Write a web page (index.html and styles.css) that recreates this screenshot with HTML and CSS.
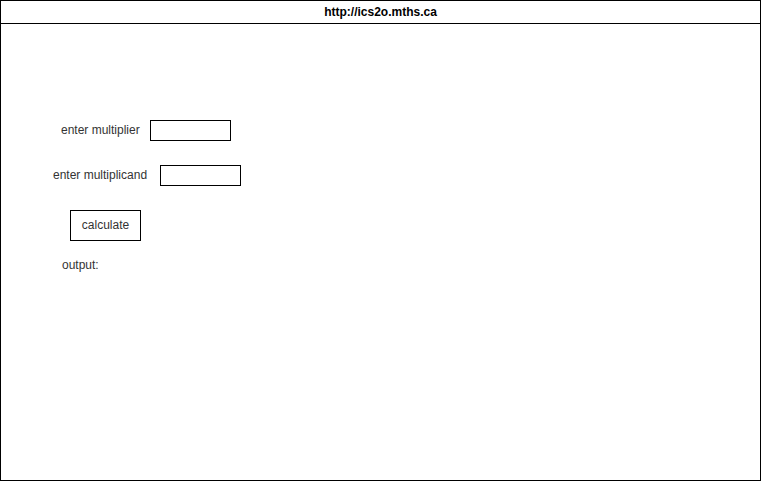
FILE: index.html
```html
<!DOCTYPE html>
<html>
<head>
<meta charset="utf-8">
<link rel="stylesheet" href="styles.css">
</head>
<body>
<div class="frame">
  <div class="titlebar">http://ics2o.mths.ca</div>
  <div class="content">
    <div class="row row-1">
      <span class="label">enter multiplier</span>
      <span class="field"></span>
    </div>
    <div class="row row-2">
      <span class="label">enter multiplicand</span>
      <span class="field"></span>
    </div>
    <div class="button-row">
      <span class="button">calculate</span>
    </div>
    <div class="output">output:</div>
  </div>
</div>
</body>
</html>
```
FILE: styles.css
```css
html, body {
  margin: 0;
  padding: 0;
  background: #fff;
}
body {
  font-family: "Liberation Sans", Arial, Helvetica, sans-serif;
  font-size: 12px;
  color: #333;
}
.frame {
  box-sizing: border-box;
  width: 761px;
  height: 481px;
  border: 1px solid #000;
  display: flex;
  flex-direction: column;
}
.titlebar {
  box-sizing: border-box;
  height: 23px;
  border-bottom: 1px solid #000;
  display: flex;
  align-items: center;
  justify-content: center;
  font-weight: bold;
  color: #000;
  padding-bottom: 1px;
}
.content {
  padding-top: 96px;
  display: flex;
  flex-direction: column;
}
.row {
  display: flex;
  align-items: center;
  height: 21px;
}
.row-1 {
  padding-left: 60px;
}
.row-1 .label {
  width: 89px;
}
.row-2 {
  margin-top: 24px;
  padding-left: 52px;
}
.row-2 .label {
  width: 107px;
}
.label {
  white-space: nowrap;
  line-height: 14px;
  margin-top: -1px;
}
.field {
  box-sizing: border-box;
  width: 81px;
  height: 21px;
  border: 1px solid #000;
  background: #fff;
}
.button-row {
  margin-top: 24px;
  padding-left: 69px;
  display: flex;
}
.button {
  box-sizing: border-box;
  width: 71px;
  height: 31px;
  border: 1px solid #000;
  display: flex;
  align-items: center;
  justify-content: center;
  padding-bottom: 1px;
}
.output {
  margin-top: 17px;
  padding-left: 61px;
  line-height: 14px;
}
```
